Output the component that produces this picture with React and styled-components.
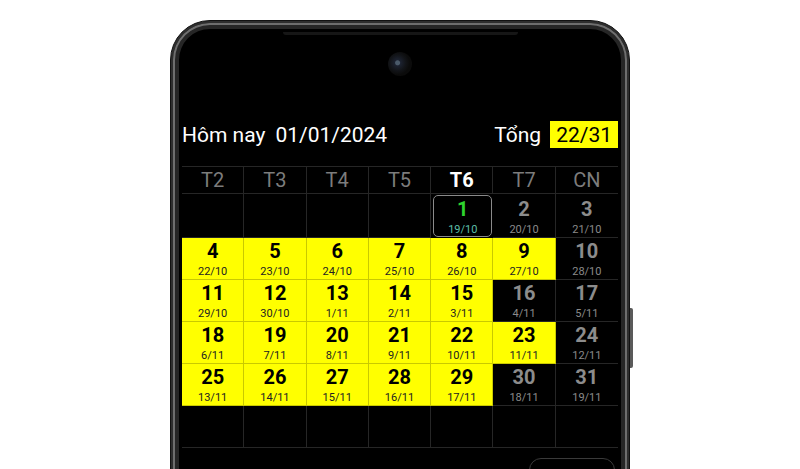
import React from 'react';
import styled, { createGlobalStyle } from 'styled-components';

const GlobalStyle = createGlobalStyle`
  html, body {
    margin: 0;
    padding: 0;
    background: #ffffff;
  }
  body {
    font-family: Roboto, 'Noto Sans', 'Liberation Sans', sans-serif;
    overflow: hidden;
  }
`;

const Page = styled.div`
  height: 469px;
  overflow: hidden;
  padding-top: 20px;
  box-sizing: border-box;
  display: flex;
  justify-content: center;
`;

// khung điện thoại
const Phone = styled.div`
  position: relative;
  flex: none;
  width: 460px;
  height: 520px;
  box-sizing: border-box;
  border-radius: 40px;
  background: #2e2e2e;
  border: 1px solid #121212;
  padding: 2px;
`;

const PowerKey = styled.div`
  position: absolute;
  right: -4px;
  top: 287px;
  width: 3px;
  height: 60px;
  border-radius: 0 2px 2px 0;
  background: #5a5a5a;
`;

const Bezel = styled.div`
  height: 100%;
  box-sizing: border-box;
  border-radius: 37px;
  background: #000;
  padding: 9px 9px 0;
  box-shadow: inset 0 0 0 2px #6e6e6e, inset 0 0 0 6px #262626;
`;

const Screen = styled.div`
  height: 100%;
  border-radius: 28px 28px 0 0;
  background: #000;
  display: flex;
  flex-direction: column;
  color: #fff;
`;

const Speaker = styled.div`
  align-self: center;
  width: 235px;
  height: 3px;
  border-radius: 0 0 3px 3px;
  background: #161616;
`;

const Camera = styled.div`
  align-self: center;
  margin-top: 17px;
  width: 24px;
  height: 24px;
  border-radius: 50%;
  background: radial-gradient(circle at 40% 45%, #4a5a6a 0 2px, #1c2230 3px, #121418 8px, #0b0b0b 12px);
`;

const TitleRow = styled.div`
  margin-top: 45px;
  height: 27px;
  display: flex;
  align-items: center;
  justify-content: space-between;
  font-size: 21px;
`;

const TitleGroup = styled.div`
  display: flex;
  align-items: center;
  gap: ${(p) => p.$gap}px;
`;

const TotalBox = styled.span`
  height: 27px;
  line-height: 28px;
  padding: 0 6px;
  background: #ffff00;
  color: #000;
`;

const Grid = styled.div`
  margin-top: 18px;
  border-top: 1px solid #262626;
  display: grid;
  grid-template-columns: repeat(7, 1fr);
  grid-template-rows: 27px 44px repeat(5, 42px);
`;

const WeekDay = styled.div`
  box-sizing: border-box;
  display: flex;
  align-items: center;
  justify-content: center;
  font-size: 20px;
  font-weight: ${(p) => (p.$current ? 700 : 400)};
  color: ${(p) => (p.$current ? '#ffffff' : '#7c7c7c')};
  border-bottom: 1px solid #262626;
  border-right: ${(p) => (p.$last ? 'none' : '1px solid #262626')};
`;

const tones = {
  yellow: { bg: '#ffff00', line: '#c9c900', num: '#000000', sub: '#222222' },
  dark: { bg: '#000000', line: '#262626', num: '#8c8c8c', sub: '#8a8a8a' },
  empty: { bg: '#000000', line: '#262626', num: '#000', sub: '#000' },
  today: { bg: '#000000', line: '#8a8a8a', num: '#2ed32e', sub: '#5cbfa8' },
};

const Cell = styled.div`
  box-sizing: border-box;
  display: flex;
  flex-direction: column;
  align-items: center;
  justify-content: flex-end;
  padding-bottom: 1px;
  background: ${(p) => tones[p.$tone].bg};
  border-bottom: 1px solid ${(p) => tones[p.$tone].line};
  border-right: ${(p) => (p.$last ? 'none' : `1px solid ${tones[p.$tone].line}`)};

  ${(p) =>
    p.$tone === 'today' &&
    `
    margin: 1px 1px 1px 2px;
    border: 1px solid #8a8a8a;
    border-radius: 5px;
    padding-bottom: 0;
  `}
`;

const DayNum = styled.span`
  font-size: 20px;
  line-height: 24px;
  font-weight: 700;
  color: ${(p) => tones[p.$tone].num};
`;

const Lunar = styled.span`
  margin-top: 2px;
  font-size: 11px;
  line-height: 13px;
  color: ${(p) => tones[p.$tone].sub};
`;

const BottomBar = styled.div`
  margin-top: 10px;
  display: flex;
  justify-content: flex-end;
  padding-right: 3px;
`;

const TimeButton = styled.div`
  width: 86px;
  height: 40px;
  box-sizing: border-box;
  border: 1.5px solid #3a3a3a;
  border-radius: 12px;
`;

const weekDays = ['T2', 'T3', 'T4', 'T5', 'T6', 'T7', 'CN'];
const offDays = [2, 3, 10, 16, 17, 24, 30, 31];

const lunarOf = (d) => (d <= 12 ? `${18 + d}/10` : `${d - 12}/11`);

const buildCells = () => {
  const cells = [];
  for (let i = 0; i < 4; i += 1) cells.push({ day: null });
  for (let d = 1; d <= 31; d += 1) cells.push({ day: d });
  while (cells.length < 42) cells.push({ day: null });
  return cells.map((c) => {
    if (!c.day) return { ...c, tone: 'empty' };
    if (c.day === 1) return { ...c, tone: 'today' };
    return { ...c, tone: offDays.includes(c.day) ? 'dark' : 'yellow' };
  });
};

export default function App() {
  const cells = buildCells();

  return (
    <Page>
      <GlobalStyle />
      <Phone>
        <PowerKey />
        <Bezel>
          <Screen>
            <Speaker />
            <Camera />
            <TitleRow>
              <TitleGroup $gap={10}>
                <span>Hôm nay</span>
                <span>01/01/2024</span>
              </TitleGroup>
              <TitleGroup $gap={9}>
                <span>Tổng</span>
                <TotalBox>22/31</TotalBox>
              </TitleGroup>
            </TitleRow>
            <Grid>
              {weekDays.map((w, i) => (
                <WeekDay key={w} $current={w === 'T6'} $last={i === 6}>
                  {w}
                </WeekDay>
              ))}
              {cells.map((c, i) => (
                <Cell key={i} $tone={c.tone} $last={i % 7 === 6}>
                  {c.day && (
                    <>
                      <DayNum $tone={c.tone}>{c.day}</DayNum>
                      <Lunar $tone={c.tone}>{lunarOf(c.day)}</Lunar>
                    </>
                  )}
                </Cell>
              ))}
            </Grid>
            <BottomBar>
              <TimeButton />
            </BottomBar>
          </Screen>
        </Bezel>
      </Phone>
    </Page>
  );
}
